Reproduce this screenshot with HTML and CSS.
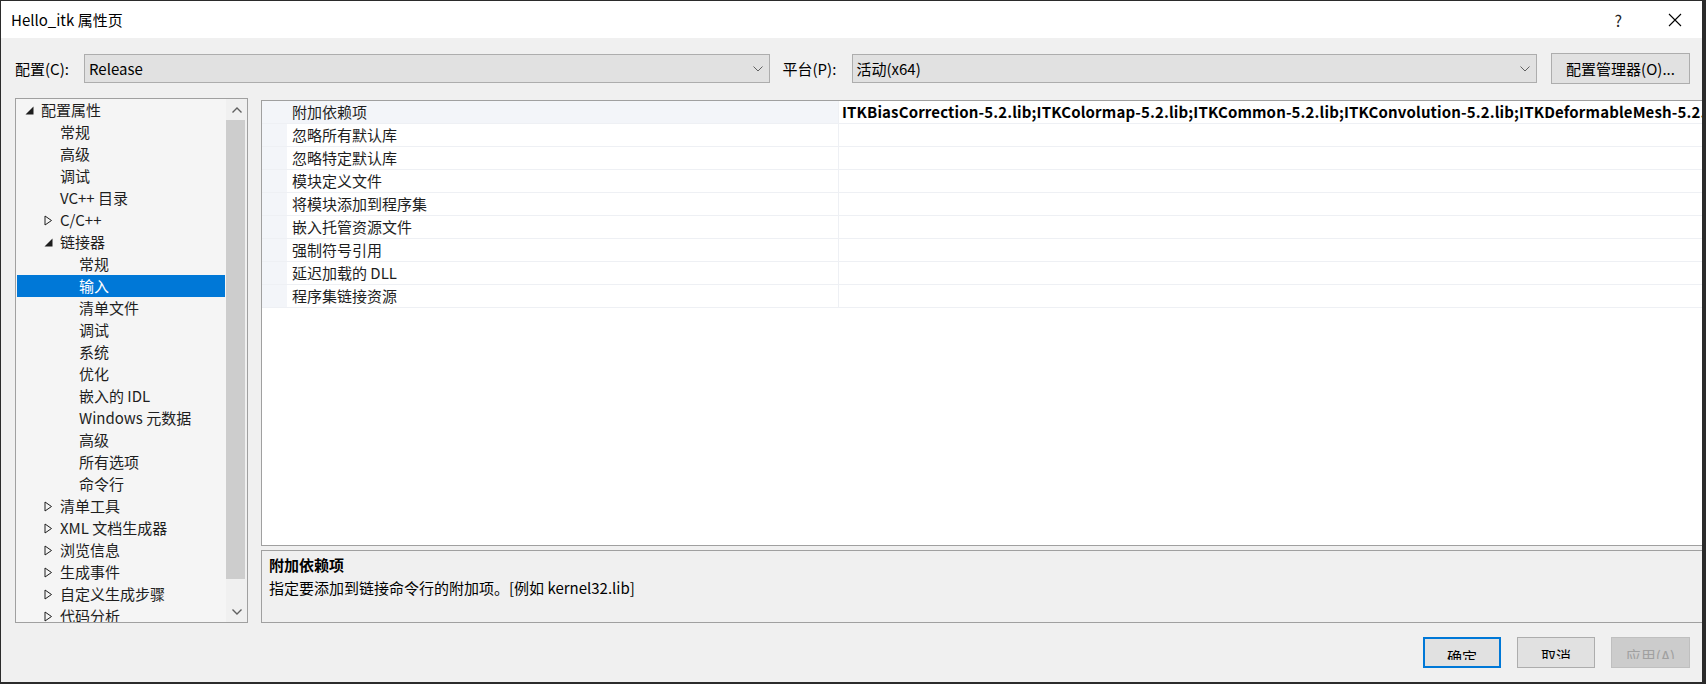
FILE: index.html
```html
<!DOCTYPE html>
<html lang="zh-CN">
<head>
    <meta charset="UTF-8">
    <title>Hello_itk 属性页</title>
    <link rel="stylesheet" href="styles.css">
</head>
<body>
    <div class="dialog">
        <!-- Title bar -->
        <div class="titlebar">
            <span class="title">Hello_itk 属性页</span>
            <span class="help">?</span>
            <svg class="close" width="14" height="14" viewBox="0 0 14 14">
                <path d="M1 1 L13 13 M13 1 L1 13" stroke="#000" stroke-width="1.1" fill="none"/>
            </svg>
        </div>

        <div class="content">
            <!-- Configuration / platform row -->
            <div class="config-row">
                <label class="field-label">配置(C):</label>
                <div class="combo">
                    <span class="combo-text">Release</span>
                    <svg class="chevron" width="10" height="6" viewBox="0 0 10 6"><path d="M0.5 0.5 L5 5 L9.5 0.5" stroke="#606060" fill="none"/></svg>
                </div>
                <label class="field-label platform-label">平台(P):</label>
                <div class="combo">
                    <span class="combo-text">活动(x64)</span>
                    <svg class="chevron" width="10" height="6" viewBox="0 0 10 6"><path d="M0.5 0.5 L5 5 L9.5 0.5" stroke="#606060" fill="none"/></svg>
                </div>
                <button class="btn btn-manager">配置管理器(O)...</button>
            </div>

            <div class="main">
                <!-- Left tree -->
                <div class="tree">
                    <ul class="tree-list">
                        <li class="tree-item lvl-0"><svg class="arrow" width="9" height="9" viewBox="0 0 9 9"><path d="M8.5 0.5 L8.5 8.5 L0.5 8.5 Z" fill="#1e1e1e"/></svg>配置属性</li>
                        <li class="tree-item lvl-1"><span class="arrow"></span>常规</li>
                        <li class="tree-item lvl-1"><span class="arrow"></span>高级</li>
                        <li class="tree-item lvl-1"><span class="arrow"></span>调试</li>
                        <li class="tree-item lvl-1"><span class="arrow"></span>VC++ 目录</li>
                        <li class="tree-item lvl-1"><svg class="arrow" width="9" height="11" viewBox="0 0 9 11"><path d="M1 1 L7.5 5.5 L1 10 Z" stroke="#1e1e1e" fill="none"/></svg>C/C++</li>
                        <li class="tree-item lvl-1"><svg class="arrow" width="9" height="9" viewBox="0 0 9 9"><path d="M8.5 0.5 L8.5 8.5 L0.5 8.5 Z" fill="#1e1e1e"/></svg>链接器</li>
                        <li class="tree-item lvl-2"><span class="arrow"></span>常规</li>
                        <li class="tree-item lvl-2 selected"><span class="arrow"></span>输入</li>
                        <li class="tree-item lvl-2"><span class="arrow"></span>清单文件</li>
                        <li class="tree-item lvl-2"><span class="arrow"></span>调试</li>
                        <li class="tree-item lvl-2"><span class="arrow"></span>系统</li>
                        <li class="tree-item lvl-2"><span class="arrow"></span>优化</li>
                        <li class="tree-item lvl-2"><span class="arrow"></span>嵌入的 IDL</li>
                        <li class="tree-item lvl-2"><span class="arrow"></span>Windows 元数据</li>
                        <li class="tree-item lvl-2"><span class="arrow"></span>高级</li>
                        <li class="tree-item lvl-2"><span class="arrow"></span>所有选项</li>
                        <li class="tree-item lvl-2"><span class="arrow"></span>命令行</li>
                        <li class="tree-item lvl-1"><svg class="arrow" width="9" height="11" viewBox="0 0 9 11"><path d="M1 1 L7.5 5.5 L1 10 Z" stroke="#1e1e1e" fill="none"/></svg>清单工具</li>
                        <li class="tree-item lvl-1"><svg class="arrow" width="9" height="11" viewBox="0 0 9 11"><path d="M1 1 L7.5 5.5 L1 10 Z" stroke="#1e1e1e" fill="none"/></svg>XML 文档生成器</li>
                        <li class="tree-item lvl-1"><svg class="arrow" width="9" height="11" viewBox="0 0 9 11"><path d="M1 1 L7.5 5.5 L1 10 Z" stroke="#1e1e1e" fill="none"/></svg>浏览信息</li>
                        <li class="tree-item lvl-1"><svg class="arrow" width="9" height="11" viewBox="0 0 9 11"><path d="M1 1 L7.5 5.5 L1 10 Z" stroke="#1e1e1e" fill="none"/></svg>生成事件</li>
                        <li class="tree-item lvl-1"><svg class="arrow" width="9" height="11" viewBox="0 0 9 11"><path d="M1 1 L7.5 5.5 L1 10 Z" stroke="#1e1e1e" fill="none"/></svg>自定义生成步骤</li>
                        <li class="tree-item lvl-1"><svg class="arrow" width="9" height="11" viewBox="0 0 9 11"><path d="M1 1 L7.5 5.5 L1 10 Z" stroke="#1e1e1e" fill="none"/></svg>代码分析</li>
                    </ul>
                    <div class="scrollbar">
                        <div class="scroll-btn">
                            <svg width="10" height="6" viewBox="0 0 10 6"><path d="M0.5 5.5 L5 1 L9.5 5.5" stroke="#606060" stroke-width="1.4" fill="none"/></svg>
                        </div>
                        <div class="scroll-thumb"></div>
                        <div class="scroll-track"></div>
                        <div class="scroll-btn">
                            <svg width="10" height="6" viewBox="0 0 10 6"><path d="M0.5 0.5 L5 5 L9.5 0.5" stroke="#606060" stroke-width="1.4" fill="none"/></svg>
                        </div>
                    </div>
                </div>

                <!-- Property grid + description -->
                <div class="right">
                    <div class="grid">
                        <div class="grid-row current">
                            <div class="grid-name">附加依赖项</div>
                            <div class="grid-value">ITKBiasCorrection-5.2.lib;ITKColormap-5.2.lib;ITKCommon-5.2.lib;ITKConvolution-5.2.lib;ITKDeformableMesh-5.2.lib;ITKDenoising-5.2.lib</div>
                        </div>
                        <div class="grid-row"><div class="grid-name">忽略所有默认库</div><div class="grid-value"></div></div>
                        <div class="grid-row"><div class="grid-name">忽略特定默认库</div><div class="grid-value"></div></div>
                        <div class="grid-row"><div class="grid-name">模块定义文件</div><div class="grid-value"></div></div>
                        <div class="grid-row"><div class="grid-name">将模块添加到程序集</div><div class="grid-value"></div></div>
                        <div class="grid-row"><div class="grid-name">嵌入托管资源文件</div><div class="grid-value"></div></div>
                        <div class="grid-row"><div class="grid-name">强制符号引用</div><div class="grid-value"></div></div>
                        <div class="grid-row"><div class="grid-name">延迟加载的 DLL</div><div class="grid-value"></div></div>
                        <div class="grid-row"><div class="grid-name">程序集链接资源</div><div class="grid-value"></div></div>
                    </div>
                    <div class="desc">
                        <div class="desc-title">附加依赖项</div>
                        <div class="desc-text">指定要添加到链接命令行的附加项。[例如 kernel32.lib]</div>
                    </div>
                </div>
            </div>

            <!-- Dialog buttons -->
            <div class="footer">
                <button class="btn btn-dialog btn-default"><span class="btn-label">确定</span></button>
                <button class="btn btn-dialog"><span class="btn-label">取消</span></button>
                <button class="btn btn-dialog btn-disabled"><span class="btn-label">应用(A)</span></button>
            </div>
        </div>
    </div>
</body>
</html>
```

FILE: styles.css
```css
/* Global */
* {
    box-sizing: border-box;
}

body {
    margin: 0;
    background-color: #2b2b2b; /* desktop behind the dialog */
    font-family: "Noto Sans CJK SC", "Open Sans", sans-serif;
    font-size: 15px;
    color: #000;
}

.dialog {
    margin: 1px;
    width: 1701px;
    height: 681px;
    background-color: #f0f0f0;
    display: flex;
    flex-direction: column;
    overflow: hidden;
}

/* Title bar */
.titlebar {
    height: 37px;
    background-color: #fff;
    display: flex;
    align-items: center;
    padding-left: 10px;
}

.title {
    flex: 1;
    font-size: 15px;
}

.help {
    font-size: 16px;
    color: #222;
    margin-right: 46px;
}

.close {
    margin-right: 20px;
}

.content {
    flex: 1;
    padding: 16px 12px 0 14px;
    display: flex;
    flex-direction: column;
}

/* Config row */
.config-row {
    display: flex;
    align-items: center;
    height: 29px;
}

.field-label {
    width: 69px;
    flex-shrink: 0;
}

.platform-label {
    margin-left: 13px;
}

.combo {
    flex: 1;
    height: 29px;
    background-color: #e1e1e1;
    border: 1px solid #adadad;
    display: flex;
    align-items: center;
    padding: 0 6px 0 4px;
}

.combo-text {
    flex: 1;
}

.btn {
    font-family: inherit;
    font-size: 15px;
    color: #000;
    background-color: #e1e1e1;
    border: 1px solid #adadad;
    padding: 0;
}

.btn-manager {
    width: 139px;
    height: 31px;
    margin-left: 14px;
}

/* Main area */
.main {
    display: flex;
    gap: 13px;
    margin-top: 15px;
    height: 525px;
}

.tree {
    width: 233px;
    flex-shrink: 0;
    border: 1px solid #a0a0a0;
    background-color: #f5f5f5;
    display: flex;
    overflow: hidden;
}

.tree-list {
    list-style: none;
    margin: 0;
    padding: 0 1px;
    flex: 1;
    overflow: hidden;
}

.tree-item {
    height: 22px;
    line-height: 22px;
    display: flex;
    align-items: center;
    white-space: nowrap;
    color: #1e1e1e;
}

.tree-item .arrow {
    width: 9px;
    margin-right: 7px;
    flex-shrink: 0;
}

.lvl-0 { padding-left: 8px; }
.lvl-1 { padding-left: 27px; }
.lvl-2 { padding-left: 46px; }

.tree-item.selected {
    background-color: #0078d7;
    color: #fff;
}

.scrollbar {
    width: 21px;
    flex-shrink: 0;
    background-color: #f0f0f0;
    display: flex;
    flex-direction: column;
}

.scroll-btn {
    height: 21px;
    display: flex;
    align-items: center;
    justify-content: center;
}

.scroll-thumb {
    height: 459px;
    background-color: #cdcdcd;
    margin-right: 2px;
}

.scroll-track {
    flex: 1;
}

/* Property grid */
.right {
    flex: 1;
    display: flex;
    flex-direction: column;
    padding-top: 2px;
    gap: 4px;
}

.grid {
    height: 447px;
    background-color: #fff;
    border: 1px solid #a0a0a0;
    overflow: hidden;
}

.grid-row {
    display: flex;
    height: 23px;
    border-bottom: 1px solid #eef0f4;
    background-color: #f3f5f9;
    padding-left: 25px;
}

.grid-name {
    width: 551px;
    flex-shrink: 0;
    background-color: #fff;
    padding-left: 5px;
    line-height: 22px;
    color: #1e1e1e;
}

.grid-row.current .grid-name {
    background-color: #f3f5f9;
}

.grid-value {
    flex: 1;
    background-color: #fff;
    border-left: 1px solid #eef0f4;
    padding-left: 3px;
    line-height: 22px;
    font-weight: bold;
    letter-spacing: 0.14px;
    white-space: nowrap;
    overflow: hidden;
}

/* Description panel */
.desc {
    height: 73px;
    border: 1px solid #a0a0a0;
    padding: 2px 7px;
}

.desc-title {
    font-weight: bold;
    line-height: 23px;
}

.desc-text {
    line-height: 23px;
}

/* Footer buttons */
.footer {
    display: flex;
    justify-content: flex-end;
    gap: 16px;
    margin-top: 14px;
}

.btn-dialog {
    width: 78px;
    height: 31px;
    display: flex;
    justify-content: center;
    align-items: flex-start;
}

.btn-label {
    display: block;
    margin-top: 8px;
    height: 13px;
    line-height: 20px;
    overflow: hidden;
}

.btn-default {
    border: 2px solid #0078d7;
}

.btn-disabled {
    width: 79px;
    background-color: #cccccc;
    border-color: #bfbfbf;
    color: #a0a0a0;
}
```
